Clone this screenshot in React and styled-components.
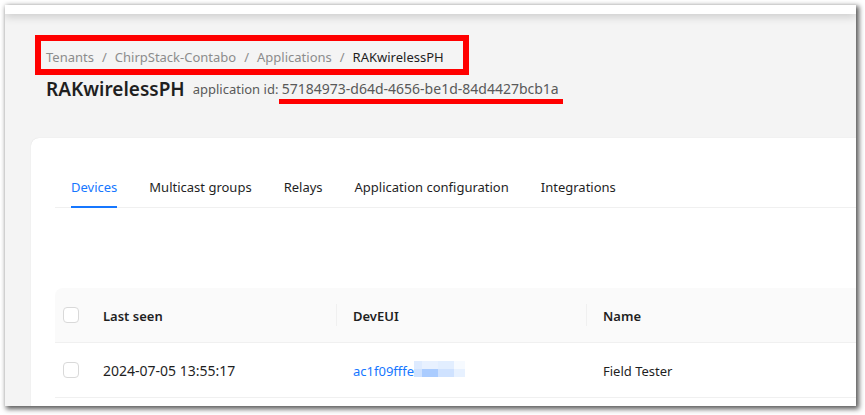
import React from "react";
import styled, { createGlobalStyle } from "styled-components";

const GlobalStyle = createGlobalStyle`
  *, *::before, *::after { box-sizing: border-box; }
  body {
    margin: 0;
    background: #fff;
    color: #1f1f1f;
    font: 13px/22px "Noto Sans", "Open Sans", sans-serif;
  }
`;

const Page = styled.div`
  display: flex;
  height: 100vh;
  padding: 5px 9px 9px 5px;
`;

const Frame = styled.div`
  flex: 1;
  min-width: 0;
  display: flex;
  flex-direction: column;
  overflow: hidden;
  background: #f4f4f4;
  box-shadow: 2px 2px 5px 1px rgba(0, 0, 0, 0.65);
`;

const TopBar = styled.header`
  flex: none;
  height: 9px;
  background: #fff;
  box-shadow: 0 2px 10px rgba(0, 0, 0, 0.2);
`;

const PageHeader = styled.div`
  flex: none;
  padding: 21px 30px 35px;
`;

const Breadcrumb = styled.nav`
  width: fit-content;
  padding: 5px 19px 1px 5px;
  border: 6px solid #ff0000;
`;

const Crumbs = styled.ol`
  display: flex;
  margin: 0;
  padding: 0;
  list-style: none;
  color: #8c8c8c;
  white-space: nowrap;

  li + li::before {
    content: "/";
    margin: 0 8px;
  }
`;

const CrumbLink = styled.a`
  color: #8c8c8c;
  text-decoration: none;
`;

const CurrentCrumb = styled.span`
  color: #1f1f1f;
`;

const TitleRow = styled.div`
  display: flex;
  align-items: center;
  gap: 8px;
  padding-left: 11px;
  white-space: nowrap;
`;

const Title = styled.h1`
  margin: 0;
  font-size: 19px;
  font-weight: 600;
  line-height: 28px;
`;

const Subtitle = styled.span`
  color: #595959;
`;

const Underlined = styled.span`
  position: relative;
  font-size: 14px;

  &::after {
    content: "";
    position: absolute;
    left: -3px;
    right: -4px;
    bottom: -6px;
    height: 5px;
    background: #ff0000;
  }
`;

const Card = styled.main`
  flex: 1 0 auto;
  margin-left: 26px;
  padding: 24px 0 0 24px;
  background: #fff;
  border-top-left-radius: 8px;
  box-shadow: 0 0 1px rgba(0, 0, 0, 0.15);
`;

const Tabs = styled.div`
  display: flex;
  gap: 32px;
  padding-left: 16px;
  margin-bottom: 80px;
  border-bottom: 1px solid #f0f0f0;
`;

const Tab = styled.button`
  margin: 0 0 -1px;
  padding: 14px 0 8px;
  border: 0;
  border-bottom: 2px solid ${(p) => (p.$active ? "#1677ff" : "transparent")};
  background: none;
  color: ${(p) => (p.$active ? "#1677ff" : "#1f1f1f")};
  font: inherit;
  white-space: nowrap;
`;

const Table = styled.table`
  width: 100%;
  table-layout: fixed;
  border-collapse: separate;
  border-spacing: 0;
`;

const CheckCol = styled.col`
  width: 32px;
`;

const DataCol = styled.col`
  width: 250px;
`;

const HeadCell = styled.th`
  position: relative;
  padding: 17px 16px 15px;
  background: #fafafa;
  border-bottom: 1px solid #f0f0f0;
  font-weight: 600;
  text-align: left;

  &:first-child {
    padding: 16px 8px;
    border-top-left-radius: 8px;
  }

  &:not(:first-child):not(:last-child)::after {
    content: "";
    position: absolute;
    top: 16px;
    right: 0;
    width: 1px;
    height: 22px;
    background: #f0f0f0;
  }
`;

const Cell = styled.td`
  padding: 17px 16px 15px;
  border-bottom: 1px solid #f0f0f0;
  white-space: nowrap;

  &:first-child {
    padding: 16px 8px;
  }
`;

const Time = styled.time`
  display: block;
  font-size: 14px;
`;

const Checkbox = styled.input`
  appearance: none;
  display: block;
  width: 16px;
  height: 16px;
  margin: 0;
  border: 1px solid #d9d9d9;
  border-radius: 4px;
  background: #fff;
`;

const DeviceLink = styled.a`
  display: flex;
  align-items: center;
  color: #1677ff;
  text-decoration: none;
`;

const Mosaic = styled.svg`
  flex: none;
  margin-top: -4px;
`;

const crumbs = ["Tenants", "ChirpStack-Contabo", "Applications"];
const tabs = ["Devices", "Multicast groups", "Relays", "Application configuration", "Integrations"];
const devices = [{ seen: "2024-07-05 13:55:17", eui: "ac1f09fffe", name: "Field Tester" }];

function MaskedDigits() {
  return (
    <Mosaic width="52" height="16" viewBox="0 0 52 16" shapeRendering="crispEdges" aria-hidden="true">
      <path fill="#deebff" d="M0 0h8v8H0z" />
      <path fill="#e8f1ff" d="M8 0h16v8H8z" />
      <path fill="#e2eeff" d="M24 0h16v8H24z" />
      <path fill="#f6faff" d="M40 0h11v8H40z" />
      <path fill="#cfe2ff" d="M0 8h8v8H0zM24 8h16v8H24z" />
      <path fill="#aaccff" d="M8 8h16v8H8z" />
      <path fill="#e7f1ff" d="M40 8h11v8H40z" />
    </Mosaic>
  );
}

export default function App() {
  return (
    <Page>
      <GlobalStyle />
      <Frame>
        <TopBar />
        <PageHeader>
          <Breadcrumb aria-label="Breadcrumb">
            <Crumbs>
              {crumbs.map((label) => (
                <li key={label}>
                  <CrumbLink href="#">{label}</CrumbLink>
                </li>
              ))}
              <li>
                <CurrentCrumb aria-current="page">RAKwirelessPH</CurrentCrumb>
              </li>
            </Crumbs>
          </Breadcrumb>
          <TitleRow>
            <Title>RAKwirelessPH</Title>
            <Subtitle>
              application id: <Underlined>57184973-d64d-4656-be1d-84d4427bcb1a</Underlined>
            </Subtitle>
          </TitleRow>
        </PageHeader>
        <Card>
          <Tabs role="tablist">
            {tabs.map((label, i) => (
              <Tab key={label} type="button" role="tab" aria-selected={i === 0} $active={i === 0}>
                {label}
              </Tab>
            ))}
          </Tabs>
          <Table>
            <colgroup>
              <CheckCol />
              <DataCol />
              <DataCol />
              <col />
            </colgroup>
            <thead>
              <tr>
                <HeadCell>
                  <Checkbox type="checkbox" aria-label="Select all devices" />
                </HeadCell>
                <HeadCell scope="col">Last seen</HeadCell>
                <HeadCell scope="col">DevEUI</HeadCell>
                <HeadCell scope="col">Name</HeadCell>
              </tr>
            </thead>
            <tbody>
              {devices.map((d) => (
                <tr key={d.eui}>
                  <Cell>
                    <Checkbox type="checkbox" aria-label={`Select ${d.name}`} />
                  </Cell>
                  <Cell>
                    <Time>{d.seen}</Time>
                  </Cell>
                  <Cell>
                    <DeviceLink href="#">
                      {d.eui}
                      <MaskedDigits />
                    </DeviceLink>
                  </Cell>
                  <Cell>{d.name}</Cell>
                </tr>
              ))}
            </tbody>
          </Table>
        </Card>
      </Frame>
    </Page>
  );
}
